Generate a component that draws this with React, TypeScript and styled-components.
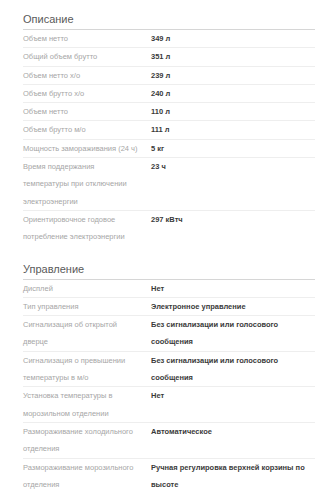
import React from "react";
import styled, { createGlobalStyle } from "styled-components";

const GlobalStyle = createGlobalStyle`
  html, body {
    margin: 0;
    padding: 0;
    background: #fff;
  }
  body {
    font-family: "Liberation Sans", Arial, sans-serif;
  }
`;

// whole page column
const Page = styled.div`
  padding: 0 0 0 23px;
  width: 315px;
  box-sizing: border-box;
`;

const Section = styled.section`
  margin-bottom: 3px;
`;

const Title = styled.h2`
  margin: 0;
  padding-top: 12px;
  height: 17px;
  font-size: 11px;
  line-height: 14px;
  font-weight: 400;
  color: #5a5a5a;
  border-bottom: 1px solid #d6d6d6;
`;

const Row = styled.div<{ $last?: boolean }>`
  display: grid;
  grid-template-columns: 128px 1fr;
  font-size: 7.5px;
  line-height: 17.3px;
  border-bottom: 1px solid ${(p) => (p.$last ? "transparent" : "#eeeeee")};
`;

const Label = styled.div`
  color: #a6a6a6;
  padding-right: 12px;
`;

const Value = styled.div`
  color: #3a3a3a;
  font-weight: 700;
  padding-right: 4px;
`;

type Spec = [string, string];

const description: Spec[] = [
  ["Объем нетто", "349 л"],
  ["Общий объем брутто", "351 л"],
  ["Объем нетто х/о", "239 л"],
  ["Объем брутто х/о", "240 л"],
  ["Объем нетто", "110 л"],
  ["Объем брутто м/о", "111 л"],
  ["Мощность замораживания (24 ч)", "5 кг"],
  ["Время поддержания температуры при отключении электроэнергии", "23 ч"],
  ["Ориентировочное годовое потребление электроэнергии", "297 кВтч"],
];

const control: Spec[] = [
  ["Дисплей", "Нет"],
  ["Тип управления", "Электронное управление"],
  ["Сигнализация об открытой дверце", "Без сигнализации или голосового сообщения"],
  ["Сигнализация о превышении температуры в м/о", "Без сигнализации или голосового сообщения"],
  ["Установка температуры в морозильном отделении", "Нет"],
  ["Размораживание холодильного отделения", "Автоматическое"],
  ["Размораживание морозильного отделения", "Ручная регулировка верхней корзины по высоте"],
];

function SpecSection({ title, items }: { title: string; items: Spec[] }) {
  return (
    <Section>
      <Title>{title}</Title>
      {items.map(([k, v], i) => (
        <Row key={i} $last={i === items.length - 1}>
          <Label>{k}</Label>
          <Value>{v}</Value>
        </Row>
      ))}
    </Section>
  );
}

export default function App() {
  return (
    <>
      <GlobalStyle />
      <Page>
        <SpecSection title="Описание" items={description} />
        <SpecSection title="Управление" items={control} />
      </Page>
    </>
  );
}
